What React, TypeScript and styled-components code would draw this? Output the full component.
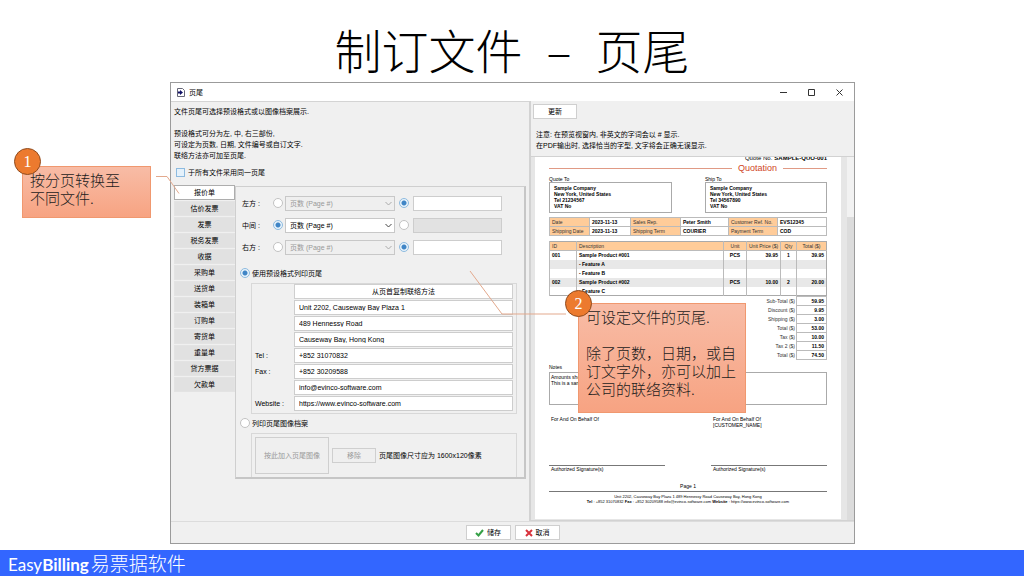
import React from 'react';
import styled, { createGlobalStyle } from 'styled-components';

const GlobalStyle = createGlobalStyle`
  * { box-sizing: border-box; }
  body { margin: 0; background: #fff; color: #000; }
  button, input, select { font: inherit; color: inherit; margin: 0; }
`;

const Slide = styled.main`
  min-height: 100vh;
  display: flex;
  flex-direction: column;
  font-family: 'Liberation Sans', 'Noto Sans CJK SC', sans-serif;
  font-size: 7px;
  line-height: 11px;
`;

const Title = styled.h1`
  margin: 0;
  height: 82px;
  padding-top: 20px;
  display: flex;
  justify-content: center;
  gap: 24px;
  font-family: 'Noto Sans CJK SC', sans-serif;
  font-weight: 300;
  font-size: 47px;
  line-height: 58px;
  color: #000;
`;

const Stage = styled.div`
  position: relative;
  flex: 1;
  display: flex;
  padding: 0 170px 6px;
`;

const Window = styled.section`
  flex: 1;
  display: flex;
  flex-direction: column;
  border: 1px solid #9b9b9b;
  background: #f0f0f0;
`;

const TitleBar = styled.header`
  display: flex;
  align-items: center;
  gap: 4px;
  height: 18px;
  padding: 0 6px;
  background: #fff;
`;

const WindowName = styled.span`
  flex: 1;
`;

const WindowButton = styled.button`
  display: flex;
  align-items: center;
  justify-content: center;
  width: 18px;
  height: 16px;
  margin-left: 6px;
  padding: 0;
  border: 0;
  background: none;
`;

const Body = styled.div`
  flex: 1;
  display: flex;
`;

const Settings = styled.div`
  flex: 0 0 358px;
  display: flex;
  flex-direction: column;
  padding: 4px 3px 0;
  border-top: 1px solid #d4d4d4;
`;

const Intro = styled.p`
  margin: 0 0 11px;
`;

const CheckLabel = styled.label`
  display: flex;
  align-items: center;
  gap: 3px;
  height: 11px;
  margin: -5px 0 7px 2px;
`;

const Check = styled.input`
  appearance: none;
  width: 9px;
  height: 9px;
  border: 1px solid #8dbbe0;
  background: #e4f1fb;
`;

const Tabbed = styled.div`
  display: flex;
  align-items: flex-start;
`;

const TabList = styled.div`
  width: 61px;
  display: flex;
  flex-direction: column;
  gap: 1px;
`;

const Tab = styled.button<{ $on?: boolean }>`
  height: 15px;
  padding: 0;
  border: 1px solid ${p => (p.$on ? '#adadad' : '#e3e3e3')};
  background: ${p => (p.$on ? '#fff' : '#e1e1e1')};
`;

const Page = styled.div`
  flex: 1;
  margin-top: 1px;
  padding: 8px 7px 0 4px;
  border: 1px solid #cfcfcf;
  border-right: 2px solid #c6c6c6;
  border-bottom: 2px solid #c6c6c6;
`;

const Slots = styled.div`
  margin-bottom: 12px;
  padding-left: 2px;
  display: grid;
  gap: 6px;
`;

const SlotRow = styled.div`
  display: grid;
  grid-template-columns: 29px 13px 111px 18px 89px;
  align-items: center;
  height: 16px;
`;

const Radio = styled.input`
  appearance: none;
  width: 10px;
  height: 10px;
  border: 1px solid #c2c2c2;
  border-radius: 50%;
  background: #fff;
  &:checked {
    border-color: #8dbbe0;
    background: radial-gradient(circle, #3f85c6 0 2px, #e8f3fb 3px);
  }
`;

const SlotRadio = styled(Radio)`
  justify-self: center;
`;

const SelectWrap = styled.div`
  position: relative;
  display: flex;
  align-items: center;
  margin-left: 1px;
`;

const Select = styled.select`
  appearance: none;
  width: 110px;
  height: 15px;
  padding: 0 4px;
  border: 1px solid #c8c8c8;
  border-radius: 0;
  background: #fff;
  &:disabled { background: #efefef; color: #999; opacity: 1; }
`;

const Chevron = styled.svg`
  position: absolute;
  right: 3px;
  pointer-events: none;
`;

const Field = styled.input`
  width: 100%;
  height: 15px;
  padding: 0 4px;
  border: 1px solid #cdcdcd;
  background: #fff;
  &:disabled { background: #e2e2e2; }
`;

const RadioLabel = styled.label`
  display: flex;
  align-items: center;
  gap: 2px;
  height: 12px;
`;

const Group = styled.div`
  margin: 4px 0 3px 11px;
  border: 1px solid #d8d8d8;
`;

const ContactGroup = styled(Group)`
  display: grid;
  grid-template-columns: 39px 1fr;
  align-items: center;
  row-gap: 1px;
  padding: 0 3px 2px;
`;

const Button = styled.button<{ $w?: number; $h?: number }>`
  display: flex;
  align-items: center;
  justify-content: center;
  gap: 3px;
  width: ${p => (p.$w ? `${p.$w}px` : '100%')};
  height: ${p => p.$h ?? 15}px;
  padding: 0;
  border: 1px solid #cfcfcf;
  background: #fff;
  &:disabled { background: #efefef; color: #9a9a9a; }
`;

const ImageGroup = styled(Group)`
  display: flex;
  align-items: center;
  gap: 3px;
  height: 44px;
  margin-bottom: 0;
  padding: 0 3px;
  border-bottom: 0;
`;

const PreviewPane = styled.div`
  flex: 1;
  display: flex;
  flex-direction: column;
  border-left: 2px solid #d2d2d2;
`;

const PreviewHead = styled.div`
  height: 55px;
  padding: 3px 2px 0;
`;

const Notice = styled.p`
  margin: 10px 3px 0;
`;

const Scroller = styled.div`
  flex: 1;
  display: flex;
  border: 1px solid #d2d2d2;
  border-width: 1px 0;
  background: #e6e6e6;
  padding-left: 4px;
`;

const Track = styled.div`
  width: 7px;
  margin-left: 6px;
  padding-top: 60px;
  background: #f2f2f2;
  display: flex;
`;

const Thumb = styled.div`
  flex: 1;
  background: #dcdcdc;
`;

const Paper = styled.article`
  flex: 1;
  height: 362px;
  padding: 0 14px;
  background: #fff;
  font-family: 'Liberation Sans', sans-serif;
  font-size: 5px;
  line-height: 6px;
  overflow: hidden;
`;

const QuoteNo = styled.div`
  height: 4px;
  display: flex;
  align-items: flex-end;
  justify-content: flex-end;
  gap: 2px;
  font-size: 6px;
`;

const DocTitle = styled.h2`
  display: grid;
  grid-template-columns: 1fr auto 44px;
  align-items: center;
  gap: 6px;
  margin: 1px 0 2px;
  font-size: 9px;
  line-height: 12px;
  font-weight: 400;
  color: #cf4525;
  &::before, &::after { content: ''; height: 1px; background: #e09a85; }
`;

const Parties = styled.div`
  display: grid;
  grid-template-columns: 123px 122px;
  justify-content: space-between;
  margin-bottom: 4px;
`;

const Address = styled.div`
  height: 31px;
  padding: 2px 4px;
  border: 1px solid #aaa;
  font-weight: 700;
`;

const Grid = styled.table`
  width: 100%;
  table-layout: fixed;
  border-collapse: collapse;
  th, td { height: 9px; padding: 0 2px; line-height: 6px; text-align: left; white-space: nowrap; }
  th { background: #ffcc99; font-weight: 400; color: #333; }
  td { font-weight: 700; }
`;

const MetaTable = styled(Grid)`
  margin-bottom: 5px;
  th, td { border: 1px solid #bbb; }
`;

const ItemTable = styled(Grid)`
  border: 1px solid #aaa;
  th, td { border-left: 1px solid #bbb; }
  thead tr { border-bottom: 1px solid #bbb; }
  tbody tr:nth-child(even) { background: #e8e8e8; }
  th:nth-child(n + 3), td:nth-child(n + 3) { text-align: center; }
  td:nth-child(4), td:nth-child(6) { text-align: right; }
`;

const Totals = styled.table`
  margin: 0 0 4px auto;
  border-collapse: collapse;
  th, td { height: 9px; padding: 0 2px; text-align: right; line-height: 6px; }
  th { font-weight: 400; color: #333; padding-right: 1px; }
  td { width: 30px; border: 1px solid #bbb; font-weight: 700; }
`;

const Notes = styled.div`
  height: 33px;
  margin: 2px 0 11px;
  padding: 1px;
  border: 1px solid #aaa;
`;

const Signatures = styled.div`
  display: grid;
  grid-template-columns: 116px 116px;
  justify-content: space-between;
`;

const Signatory = styled.div`
  height: 50px;
  padding-left: 2px;
  border-bottom: 1px solid #777;
`;

const SignLabel = styled.div`
  padding-left: 2px;
`;

const PageNo = styled.div`
  margin-top: 11px;
  padding-bottom: 2px;
  border-bottom: 1px solid #777;
  text-align: center;
`;

const DocFooter = styled.div`
  padding-top: 2px;
  font-size: 4px;
  line-height: 5px;
  text-align: center;
`;

const Actions = styled.footer`
  display: flex;
  align-items: center;
  justify-content: center;
  gap: 4px;
  height: 22px;
  border-top: 1px solid #dcdcdc;
`;

const Callout = styled.aside<{ $x: number; $y: number; $w: number; $h: number }>`
  position: absolute;
  left: ${p => p.$x}px;
  top: ${p => p.$y}px;
  width: ${p => p.$w}px;
  height: ${p => p.$h}px;
  padding: 4px 0 0 7px;
  border: 1px solid #f0986f;
  background: linear-gradient(#f8bca6, #f7a382);
  font-family: 'Noto Sans CJK SC', sans-serif;
  font-weight: 300;
  font-size: 15px;
  line-height: 18px;
  white-space: pre-line;
  color: #1c1c1c;
`;

const Badge = styled.span<{ $x: number; $y: number }>`
  position: absolute;
  left: ${p => p.$x}px;
  top: ${p => p.$y}px;
  width: 27px;
  height: 27px;
  border: 1px solid #8f4b1e;
  border-radius: 50%;
  background: #ec7a2e;
  color: #fff;
  font-family: 'Liberation Serif', serif;
  font-weight: 400;
  font-size: 16px;
  line-height: 26px;
  text-align: center;
`;

const Connector = styled.svg<{ $x: number; $y: number }>`
  position: absolute;
  left: ${p => p.$x}px;
  top: ${p => p.$y}px;
  fill: none;
  stroke: #e3a98d;
`;

const BrandBar = styled.footer`
  height: 26px;
  padding-left: 8px;
  background: #3366ff;
  color: #fff;
  font-family: Lato, 'Noto Sans CJK SC', sans-serif;
  font-size: 17px;
  line-height: 26px;
`;

const BrandCjk = styled.span`
  margin-left: 2px;
  font-family: 'Noto Sans CJK SC', sans-serif;
  font-weight: 300;
  font-size: 19px;
`;

const tabs = ['报价单', '估价发票', '发票', '税务发票', '收据', '采购单', '送货单', '装箱单', '订购单', '寄货单', '重量单', '贷方票据', '欠款单'];

const slots = [
  { name: '左方', page: false },
  { name: '中间', page: true },
  { name: '右方', page: false },
];

const contacts = [
  ['', 'Unit 2202, Causeway Bay Plaza 1'],
  ['', '489 Hennessy Road'],
  ['', 'Causeway Bay, Hong Kong'],
  ['Tel :', '+852 31070832'],
  ['Fax :', '+852 30209588'],
  ['', 'info@evinco-software.com'],
  ['Website :', 'https://www.evinco-software.com'],
];

const items = [
  ['001', 'Sample Product #001', 'PCS', '39.95', '1', '39.95'],
  ['', '- Feature A', '', '', '', ''],
  ['', '- Feature B', '', '', '', ''],
  ['002', 'Sample Product #002', 'PCS', '10.00', '2', '20.00'],
  ['', '- Feature C', '', '', '', ''],
];

const totals = [
  ['Sub-Total ($)', '59.95'],
  ['Discount ($)', '9.95'],
  ['Shipping ($)', '3.00'],
  ['Total ($)', '53.00'],
  ['Tax ($)', '10.00'],
  ['Tax 2 ($)', '11.50'],
  ['Total ($)', '74.50'],
];

function Preview() {
  return (
    <Paper>
      <QuoteNo>Quote No. <b>SAMPLE-QUO-001</b></QuoteNo>
      <DocTitle>Quotation</DocTitle>
      <Parties>
        <div>Quote To<Address>Sample Company<br />New York, United States<br />Tel 21234567<br />VAT No</Address></div>
        <div>Ship To<Address>Sample Company<br />New York, United States<br />Tel 34567890<br />VAT No</Address></div>
      </Parties>
      <MetaTable>
        <colgroup>
          {[40, 41, 50, 48, 49, 49].map((w, i) => <col key={i} width={w} />)}
        </colgroup>
        <tbody>
          <tr><th>Date</th><td>2023-11-13</td><th>Sales Rep.</th><td>Peter Smith</td><th>Customer Ref. No.</th><td>EVS12345</td></tr>
          <tr><th>Shipping Date</th><td>2023-11-13</td><th>Shipping Term</th><td>COURIER</td><th>Payment Term</th><td>COD</td></tr>
        </tbody>
      </MetaTable>
      <ItemTable>
        <colgroup>
          {[27, 147, 23, 34, 16, 30].map((w, i) => <col key={i} width={w} />)}
        </colgroup>
        <thead>
          <tr><th>ID</th><th>Description</th><th>Unit</th><th>Unit Price ($)</th><th>Qty</th><th>Total ($)</th></tr>
        </thead>
        <tbody>
          {items.map((row, i) => <tr key={i}>{row.map((cell, j) => <td key={j}>{cell}</td>)}</tr>)}
        </tbody>
      </ItemTable>
      <Totals>
        <tbody>
          {totals.map(([name, value], i) => <tr key={i}><th>{name}</th><td>{value}</td></tr>)}
        </tbody>
      </Totals>
      Notes
      <Notes>Amounts shown<br />This is a sample</Notes>
      <Signatures>
        <Signatory>For And On Behalf Of</Signatory>
        <Signatory>For And On Behalf Of<br />[CUSTOMER_NAME]</Signatory>
        <SignLabel>Authorized Signature(s)</SignLabel>
        <SignLabel>Authorized Signature(s)</SignLabel>
      </Signatures>
      <PageNo>Page 1</PageNo>
      <DocFooter>
        Unit 2202, Causeway Bay Plaza 1 489 Hennessy Road Causeway Bay, Hong Kong<br />
        <b>Tel</b> : +852 31070832 <b>Fax</b> : +852 30209588 info@evinco-software.com <b>Website</b> : https://www.evinco-software.com
      </DocFooter>
    </Paper>
  );
}

export default function App() {
  return (
    <Slide>
      <GlobalStyle />
      <Title><span>制订文件</span><span>–</span><span>页尾</span></Title>
      <Stage>
        <Window>
          <TitleBar>
            <svg width="8" height="9" viewBox="0 0 8 9">
              <path d="M.5.5h5l2 2v6h-7z" fill="#fff" stroke="#667" />
              <path d="M1 3.500h2V2l3 2.500L3 7V5.500H1z" fill="#116" />
            </svg>
            <WindowName>页尾</WindowName>
            <WindowButton aria-label="最小化">
              <svg width="7" height="7" stroke="#333"><path d="M0 3.500h7" /></svg>
            </WindowButton>
            <WindowButton aria-label="最大化">
              <svg width="7" height="7" stroke="#333" fill="none"><path d="M.5.5h6v6h-6z" /></svg>
            </WindowButton>
            <WindowButton aria-label="关闭">
              <svg width="7" height="7" stroke="#333"><path d="M.5.500l6 6M6.500.500l-6 6" /></svg>
            </WindowButton>
          </TitleBar>
          <Body>
            <Settings>
              <Intro>文件页尾可选择预设格式或以图像档案展示.</Intro>
              <Intro>预设格式可分为左, 中, 右三部份,<br />可设定为页数, 日期, 文件编号或自订文字.<br />联络方法亦可加至页尾.</Intro>
              <CheckLabel><Check type="checkbox" />于所有文件采用同一页尾</CheckLabel>
              <Tabbed>
                <TabList role="tablist">
                  {tabs.map((name, i) => <Tab key={name} role="tab" aria-selected={i === 0} $on={i === 0}>{name}</Tab>)}
                </TabList>
                <Page>
                  <Slots>
                    {slots.map(({ name, page }) => (
                      <SlotRow key={name}>
                        <span>{name} :</span>
                        <SlotRadio type="radio" name={name} aria-label={`${name} 预设`} defaultChecked={page} />
                        <SelectWrap>
                          <Select aria-label={name} disabled={!page}><option>页数 (Page #)</option></Select>
                          <Chevron width="7" height="5" fill="none" stroke={page ? '#444' : '#aaa'}><path d="M.5 1l3 3 3-3" /></Chevron>
                        </SelectWrap>
                        <SlotRadio type="radio" name={name} aria-label={`${name} 自订`} defaultChecked={!page} />
                        <Field aria-label={`${name} 文字`} disabled={page} />
                      </SlotRow>
                    ))}
                  </Slots>
                  <RadioLabel><Radio type="radio" name="mode" defaultChecked />使用预设格式列印页尾</RadioLabel>
                  <ContactGroup>
                    <span />
                    <Button>从页首复制联络方法</Button>
                    {contacts.map(([label, value], i) => (
                      <React.Fragment key={i}>
                        <label htmlFor={`contact${i}`}>{label}</label>
                        <Field id={`contact${i}`} defaultValue={value} />
                      </React.Fragment>
                    ))}
                  </ContactGroup>
                  <RadioLabel><Radio type="radio" name="mode" />列印页尾图像档案</RadioLabel>
                  <ImageGroup>
                    <Button $w={74} $h={37} disabled>按此加入页尾图像</Button>
                    <Button $w={44} disabled>移除</Button>
                    <span>页尾图像尺寸应为 1600x120像素</span>
                  </ImageGroup>
                </Page>
              </Tabbed>
            </Settings>
            <PreviewPane>
              <PreviewHead>
                <Button $w={44}>更新</Button>
                <Notice>注意: 在预览视窗内, 非英文的字词会以 # 显示.<br />在PDF输出时, 选择恰当的字型, 文字将会正确无误显示.</Notice>
              </PreviewHead>
              <Scroller>
                <Preview />
                <Track><Thumb /></Track>
              </Scroller>
            </PreviewPane>
          </Body>
          <Actions>
            <Button $w={45}>
              <svg width="9" height="8" fill="none" stroke="#35a046" strokeWidth="2"><path d="M1 4l2.500 2.500L8 1" /></svg>
              储存
            </Button>
            <Button $w={45}>
              <svg width="8" height="8" fill="none" stroke="#d8323c" strokeWidth="2"><path d="M1 1l6 6M7 1L1 7" /></svg>
              取消
            </Button>
          </Actions>
        </Window>
        <Connector $x={156} $y={94} width="25" height="20"><path d="M0 .5h11l12 17" /></Connector>
        <Connector $x={469} $y={188} width="98" height="46"><path d="M1 1l32 43h64" /></Connector>
        <Callout $x={22} $y={84} $w={129} $h={52}>
          <Badge $x={-9} $y={-19}>1</Badge>
          {'按分页转换至\n不同文件.'}
        </Callout>
        <Callout $x={578} $y={221} $w={168} $h={110}>
          <Badge $x={-14} $y={-14}>2</Badge>
          {'可设定文件的页尾.\n\n除了页数，日期，或自\n订文字外，亦可以加上\n公司的联络资料.'}
        </Callout>
      </Stage>
      <BrandBar>Easy<b>Billing</b><BrandCjk>易票据软件</BrandCjk></BrandBar>
    </Slide>
  );
}
